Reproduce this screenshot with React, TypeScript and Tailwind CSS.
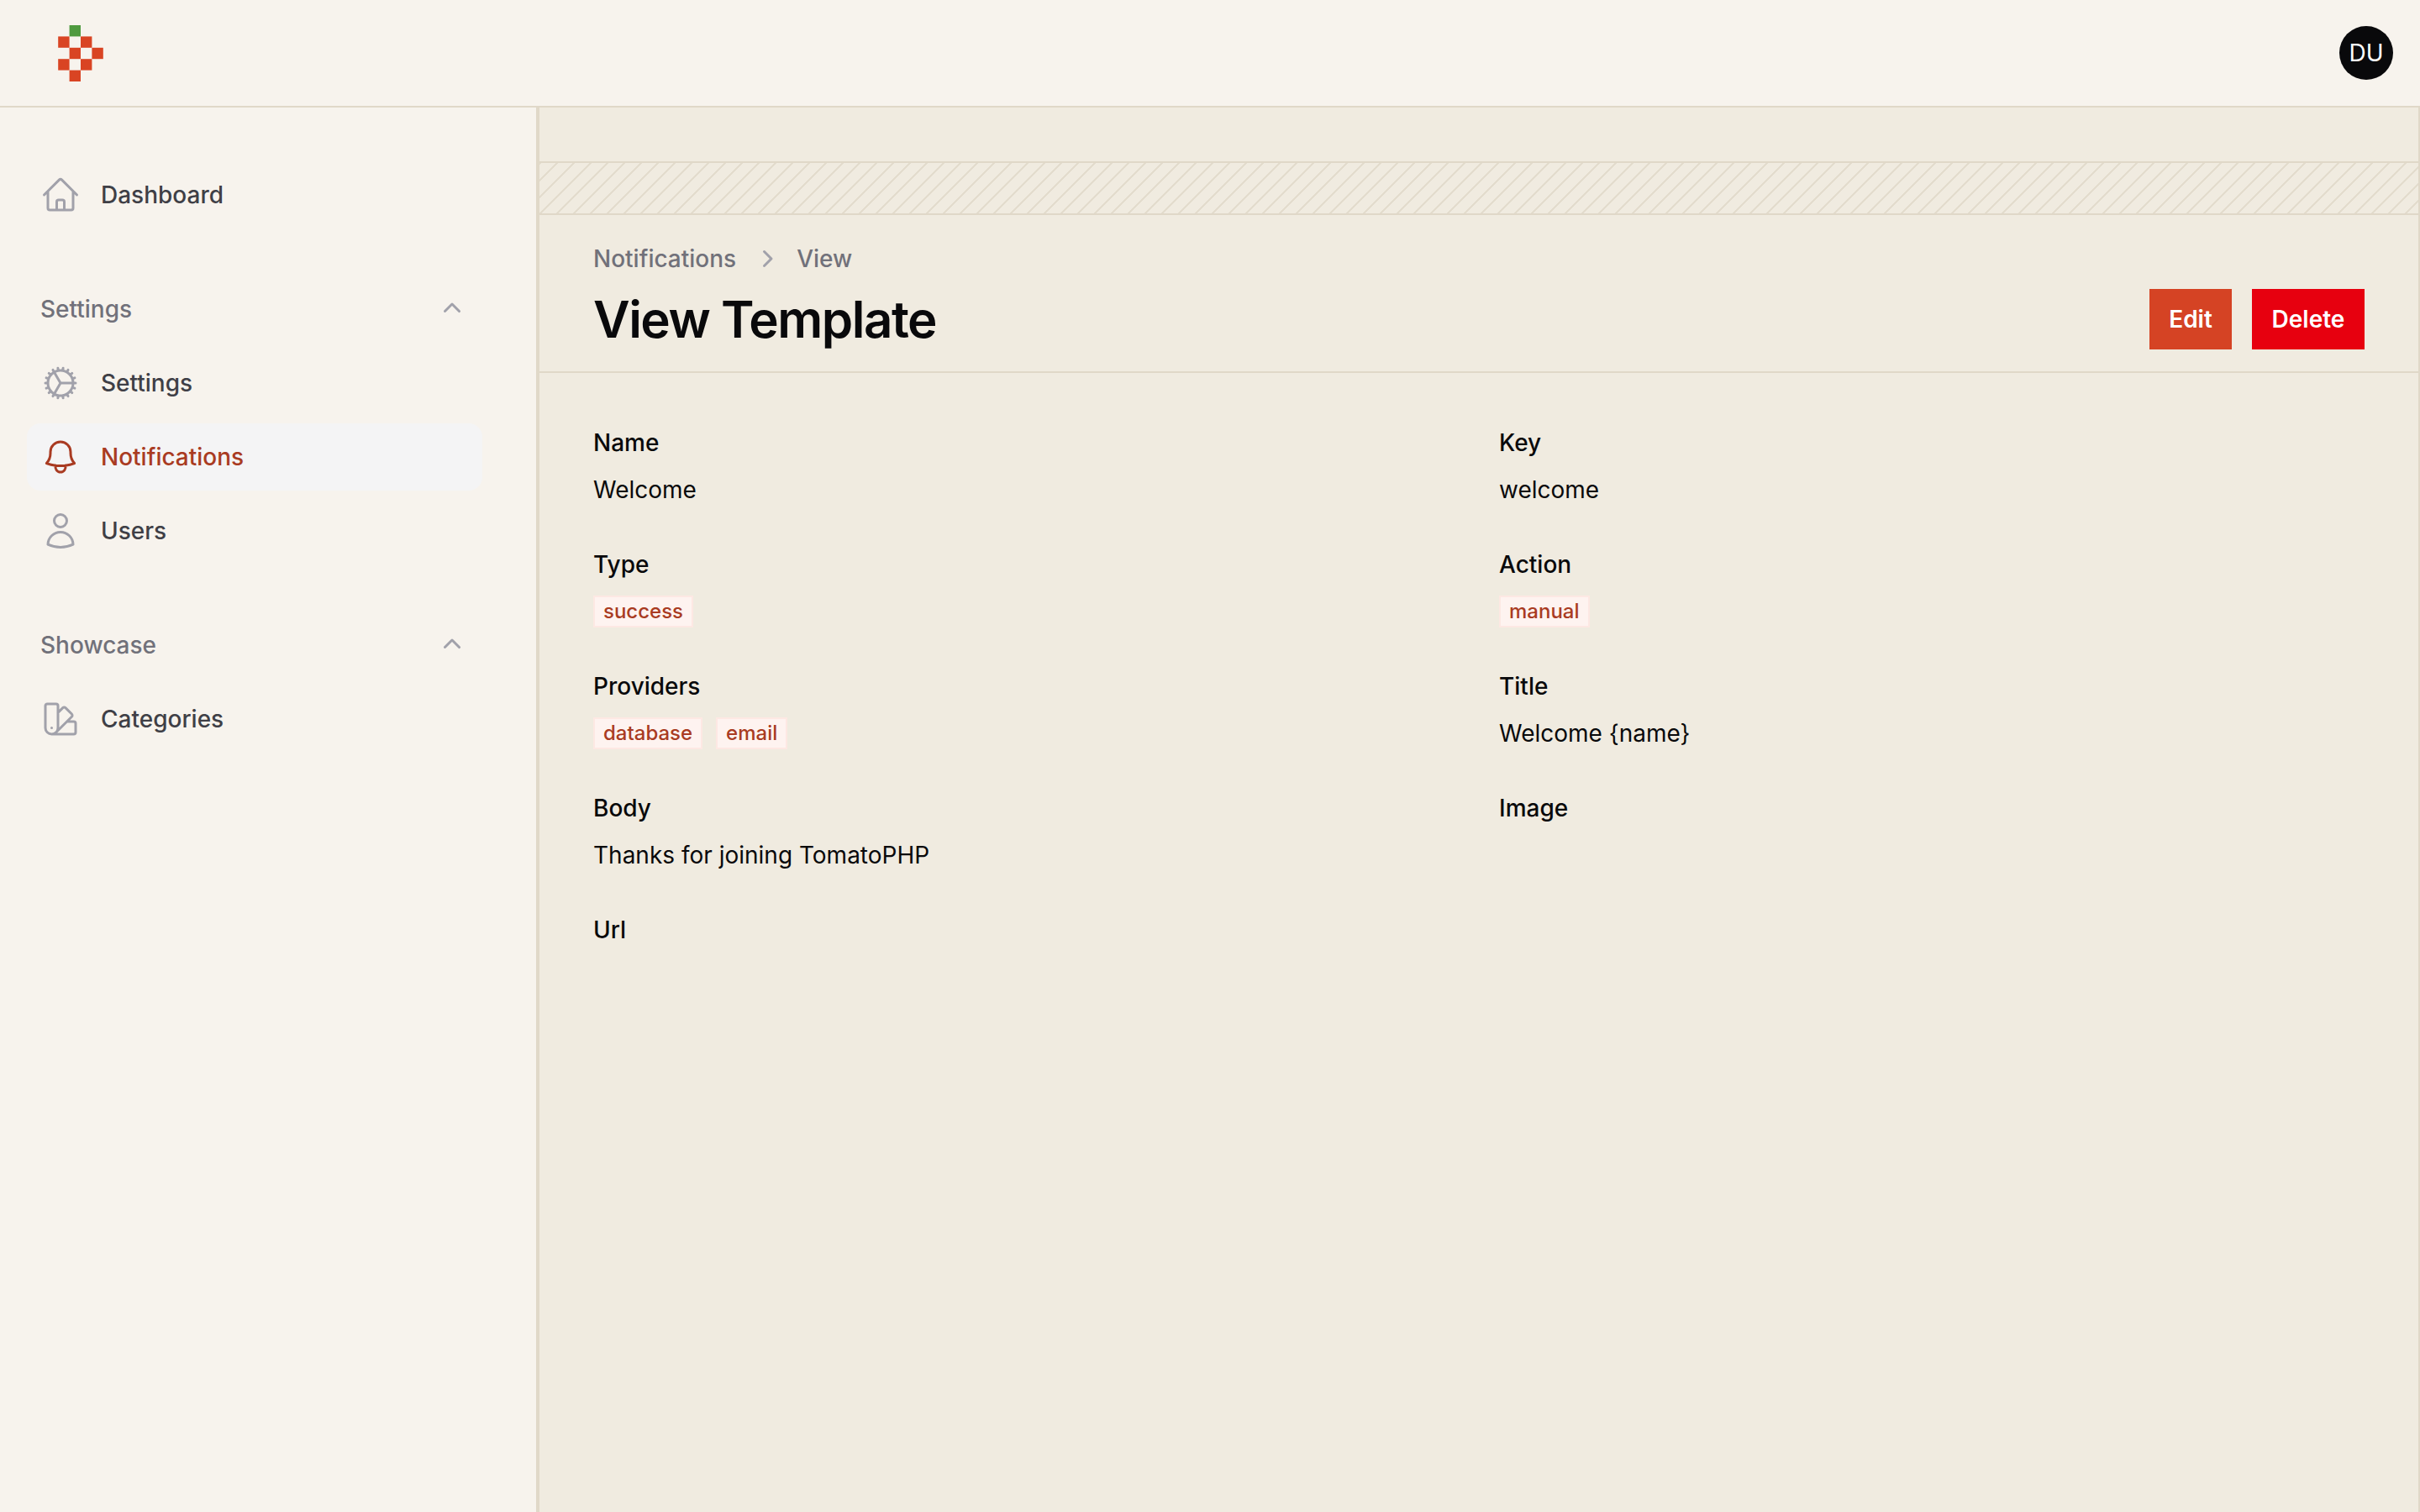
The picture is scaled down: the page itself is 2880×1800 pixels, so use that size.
import type { ReactNode } from "react"
import {
  HiMiniChevronRight,
  HiMiniChevronUp,
  HiOutlineBell,
  HiOutlineCog,
  HiOutlineHome,
  HiOutlineSwatch,
  HiOutlineUser,
} from "react-icons/hi2"

const Logo = () => {
  const red = [
    [0, 1],
    [2, 1],
    [1, 2],
    [3, 2],
    [0, 3],
    [2, 3],
    [1, 4],
  ]
  return (
    <svg viewBox="0 0 4 5" className="w-[54px] h-[67px]">
      <rect x="1" y="0" width="1" height="1" fill="#4f9a3f" />
      {red.map(([x, y]) => (
        <rect key={`${x}-${y}`} x={x} y={y} width="1" height="1" fill="#d94423" />
      ))}
    </svg>
  )
}

const NavItem = ({
  icon,
  label,
  active,
}: {
  icon: ReactNode
  label: string
  active?: boolean
}) => (
  <div
    className={`flex items-center gap-6 h-20 px-4 rounded-2xl ${
      active ? "bg-[#f4f4f5] text-[#a93b22]" : "text-[#3f3f46]"
    }`}
  >
    <span className={active ? "text-[#a93b22]" : "text-[#a1a1aa]"}>{icon}</span>
    <span className="text-[28px] leading-10 font-medium">{label}</span>
  </div>
)

const GroupLabel = ({ label }: { label: string }) => (
  <div className="flex items-center justify-between h-12 px-4 mb-6">
    <span className="text-[28px] leading-10 font-medium text-[#71717a]">{label}</span>
    <HiMiniChevronUp size={40} className="text-[#a1a1aa]" />
  </div>
)

const Badge = ({ children }: { children: ReactNode }) => (
  <span className="inline-flex items-center h-[38px] px-[10px] bg-[#fef3f0] border-2 border-[#fde8e3] text-[24px] leading-8 font-medium text-[#a93b22]">
    {children}
  </span>
)

const Field = ({ label, children }: { label: string; children?: ReactNode }) => (
  <div className="flex flex-col gap-2">
    <div className="h-12 flex items-center text-[28px] font-medium text-[#09090b]">{label}</div>
    {children && <div className="h-12 flex items-center gap-4 text-[28px] text-[#09090b]">{children}</div>}
  </div>
)

export default function App() {
  const iconSize = 48
  return (
    <div className="h-[1800px] flex flex-col bg-[#f7f3ed] font-[Inter,sans-serif] overflow-hidden">
      {/* Topbar */}
      <header className="h-32 shrink-0 flex items-center justify-between pl-[69px] pr-8 border-b-2 border-[#e0d8c8]">
        <Logo />
        <div className="w-16 h-16 rounded-full bg-[#09090b] text-white flex items-center justify-center text-[28px] leading-none">
          DU
        </div>
      </header>

      <div className="flex flex-1 min-h-0">
        {/* Sidebar */}
        <aside className="w-[640px] shrink-0 border-r-2 border-[#e0d8c8] pt-16 pl-8 pr-16 flex flex-col gap-[72px]">
          <NavItem icon={<HiOutlineHome size={iconSize} />} label="Dashboard" />

          <div>
            <GroupLabel label="Settings" />
            <div className="flex flex-col gap-2">
              <NavItem icon={<HiOutlineCog size={iconSize} />} label="Settings" />
              <NavItem icon={<HiOutlineBell size={iconSize} />} label="Notifications" active />
              <NavItem icon={<HiOutlineUser size={iconSize} />} label="Users" />
            </div>
          </div>

          <div>
            <GroupLabel label="Showcase" />
            <NavItem icon={<HiOutlineSwatch size={iconSize} />} label="Categories" />
          </div>
        </aside>

        {/* Main */}
        <main className="flex-1 bg-[#f0ebe0] border-x-2 border-[#e0d8c8]">
          <div className="h-16" />
          <div className="h-16 border-y-2 border-[#e0d8c8] bg-[repeating-linear-gradient(135deg,#e3dccd_0,#e3dccd_2px,transparent_2px,transparent_14.14px)]" />

          <div className="flex items-end justify-between h-[188px] px-16 pt-8 pb-[26px] border-b-2 border-[#e0d8c8]">
            <div>
              <div className="flex items-center h-10 gap-4 text-[28px] font-medium text-[#71717a]">
                <span>Notifications</span>
                <HiMiniChevronRight size={40} className="text-[#a1a1aa]" />
                <span>View</span>
              </div>
              <h1 className="mt-4 text-[60px] leading-[72px] font-semibold tracking-tight text-[#09090b]">
                View Template
              </h1>
            </div>
            <div className="flex gap-6">
              <button className="h-[72px] w-[98px] bg-[#d54324] text-white text-[28px] font-semibold">Edit</button>
              <button className="h-[72px] w-[134px] bg-[#e7000f] text-white text-[28px] font-semibold">Delete</button>
            </div>
          </div>

          <div className="grid grid-cols-2 gap-x-12 gap-y-[41px] px-16 pt-[59px]">
            <Field label="Name">Welcome</Field>
            <Field label="Key">welcome</Field>
            <Field label="Type">
              <Badge>success</Badge>
            </Field>
            <Field label="Action">
              <Badge>manual</Badge>
            </Field>
            <Field label="Providers">
              <Badge>database</Badge>
              <Badge>email</Badge>
            </Field>
            <Field label="Title">Welcome {"{name}"}</Field>
            <Field label="Body">Thanks for joining TomatoPHP</Field>
            <Field label="Image" />
            <Field label="Url" />
          </div>
        </main>
      </div>
    </div>
  )
}
